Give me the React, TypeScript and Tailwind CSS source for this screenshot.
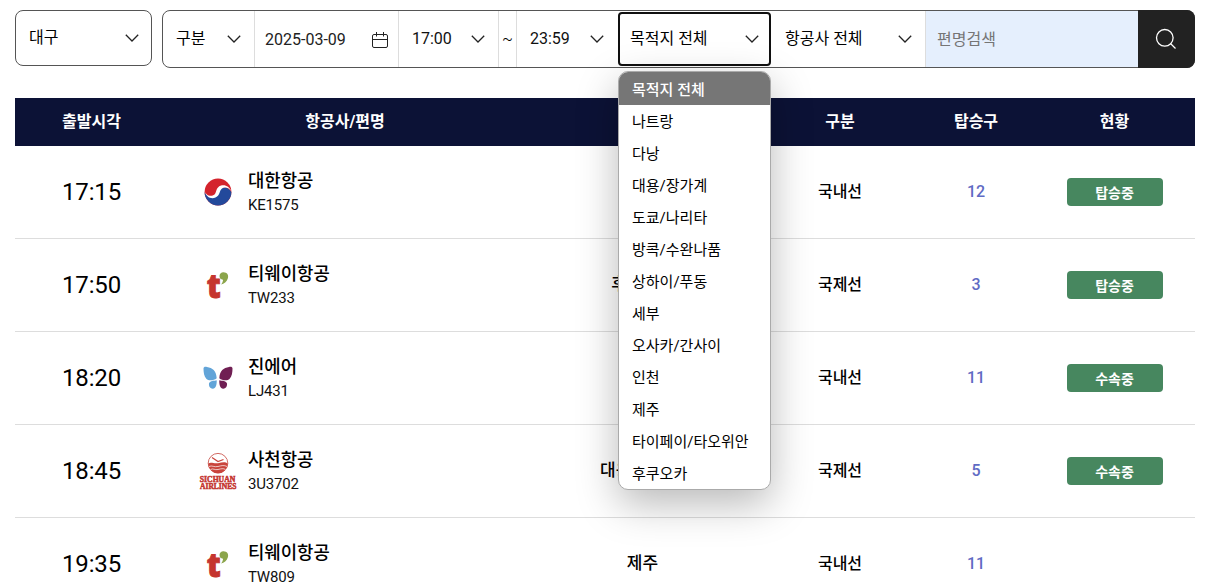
import type { ReactNode } from 'react';

const airports = [
  '목적지 전체', '나트랑', '다낭', '대용/장가계', '도쿄/나리타', '방콕/수완나품', '상하이/푸동',
  '세부', '오사카/간사이', '인천', '제주', '타이페이/타오위안', '후쿠오카',
];

type Flight = {
  time: string;
  logo: ReactNode;
  airline: string;
  code: string;
  dest?: string;
  kind: string;
  gate: string;
  status?: string;
};

function Chevron() {
  return (
    <svg width="14" height="8" viewBox="0 0 14 8" fill="none" stroke="#222" strokeWidth="1.3" className="shrink-0">
      <path d="M0.8 0.8 7 7 13.2 0.8" />
    </svg>
  );
}

function CalendarIcon() {
  return (
    <svg width="16" height="17" viewBox="0 0 16 17" fill="none" stroke="#222" strokeWidth="1" className="shrink-0">
      <rect x="0.5" y="2.5" width="15" height="13" rx="1.5" />
      <path d="M0.5 7.5h15M4.5 0v4.5M11.5 0v4.5" />
    </svg>
  );
}

function KoreanAirLogo() {
  return (
    <svg width="28" height="28" viewBox="0 0 28 28">
      <circle cx="14" cy="14" r="13.4" fill="#d4232c" />
      <path d="M0.600 14C2.500 20 10.500 20.500 13.500 14.800S22.500 6.800 27.400 14A13.400 13.400 0 0 1 0.600 14Z" fill="#23499b" />
      <path d="M0.600 12.500C2 18.300 7.500 19 10.500 16.500 13 14.300 11.500 9.500 17 7.600 21 6.200 25.500 8.600 27.200 13 24.500 9.500 20.500 8.600 18 10.600 15 13 16.500 17.500 11.500 19.600 7 21.400 2 19.300 0.600 12.500Z" fill="#fff" />
    </svg>
  );
}

function TwayLogo() {
  return (
    <svg width="36" height="36" viewBox="0 0 36 36" overflow="visible">
      <text x="6.700" y="30.800" fontSize="33" fontWeight="800" fill="#c5352f" stroke="#c5352f" strokeWidth="0.900" fontFamily="Open Sans, Noto Sans, sans-serif" textLength="14" lengthAdjust="spacingAndGlyphs">t</text>
      <path d="M19.500 9a3.800 3.800 0 0 1 4-3.800C27 5.200 29 8 27.800 11.500 26.800 14.800 24.200 17 21 17.500 22.300 15.900 23 14.500 23 12.700A3.800 3.800 0 0 1 19.500 9Z" fill="#8ba54c" />
    </svg>
  );
}

function JinAirLogo() {
  return (
    <svg width="30" height="26" viewBox="0 0 30 26">
      <path d="M0.500 3.500C0.500 2 2 1.500 4 2 9.500 3 13.200 5.500 13.700 13.200 11 15.500 5.500 16 3.500 14 1 11.500 0.500 7 0.500 3.500Z" fill="#62a4d8" />
      <path d="M29.500 3.500C29.500 2 28 1.500 26 2 20.500 3 16.800 5.500 16.300 13.200 19 15.500 24.500 16 26.500 14 29 11.500 29.500 7 29.500 3.500Z" fill="#701f53" />
      <path d="M13.700 15.200C11 15.800 6.500 15.800 6 18.500 5.600 21.500 7.500 23.800 9.800 23.700 12.700 23.600 13.900 19.700 13.700 15.200Z" fill="#62a4d8" />
      <path d="M16.300 15.200C19 15.800 23.500 15.800 24 18.500 24.400 21.500 22.500 23.800 20.200 23.700 17.300 23.600 16.100 19.700 16.300 15.200Z" fill="#701f53" />
    </svg>
  );
}

function SichuanLogo() {
  return (
    <svg width="40" height="40" viewBox="0 0 40 40">
      <circle cx="20" cy="12.200" r="9.800" fill="#fff" stroke="#cc5a52" strokeWidth="0.900" />
      <path d="M10.200 12.500C13 10.500 16 13 20 12.200S27 10.500 29.800 12.500A9.800 9.800 0 0 1 10.200 12.500Z" fill="#c9443c" />
      <path d="M14 6.500 20 10.500 25.500 8.500" fill="none" stroke="#c9443c" strokeWidth="1.200" />
      <path d="M11 15.500c3-1.500 5 1 9 0s6-1.500 9 0M12.500 18.500c3-1.500 4 .8 7.500 0s5-1.300 7.500 0" fill="none" stroke="#fff" strokeWidth="0.700" />
      <g fill="#c4352f" stroke="#c4352f" strokeWidth="0.500" fontFamily="Liberation Serif, Times New Roman, serif" fontWeight="700" fontSize="7.800">
        <text x="1.800" y="31.200" textLength="35.500" lengthAdjust="spacingAndGlyphs">SICHUAN</text>
        <text x="2" y="37.600" textLength="36.500" lengthAdjust="spacingAndGlyphs">AIRLINES</text>
      </g>
    </svg>
  );
}

const flights: Flight[] = [
  { time: '17:15', logo: <KoreanAirLogo />, airline: '대한항공', code: 'KE1575', kind: '국내선', gate: '12', status: '탑승중' },
  { time: '17:50', logo: <TwayLogo />, airline: '티웨이항공', code: 'TW233', dest: '후쿠오카', kind: '국제선', gate: '3', status: '탑승중' },
  { time: '18:20', logo: <JinAirLogo />, airline: '진에어', code: 'LJ431', kind: '국내선', gate: '11', status: '수속중' },
  { time: '18:45', logo: <SichuanLogo />, airline: '사천항공', code: '3U3702', dest: '대용/장가계', kind: '국제선', gate: '5', status: '수속중' },
  { time: '19:35', logo: <TwayLogo />, airline: '티웨이항공', code: 'TW809', dest: '제주', kind: '국내선', gate: '11' },
];

const columns = 'grid grid-cols-[153px_354px_240px_156px_116px_161px]';

function FilterBar() {
  return (
    <div className="flex items-start gap-[10px] text-base leading-6">
      <div className="flex h-14 w-[137px] items-center justify-between rounded-lg border border-[#555] pr-[12px] pl-[13px]">
        <span>대구</span>
        <Chevron />
      </div>
      <div className="flex h-[58px] w-[1033px] rounded-lg border border-[#555]">
        <div className="flex w-[92px] items-center justify-between border-r border-[#ddd] pr-[13px] pl-[13px]">
          <span>구분</span>
          <Chevron />
        </div>
        <div className="flex w-36 items-center justify-between border-r border-[#ddd] pt-[2px] pr-[10px] pl-[10px] text-[#222]">
          <span>2025-03-09</span>
          <CalendarIcon />
        </div>
        <div className="flex w-[100px] items-center justify-between border-r border-[#ddd] pr-[13px] pl-[13px] text-[#111]">
          <span>17:00</span>
          <Chevron />
        </div>
        <div className="flex w-[18px] items-center justify-center border-r border-[#ddd] text-base font-light">~</div>
        <div className="flex w-[101px] items-center justify-between pr-[14px] pl-[13px] text-[#111]">
          <span>23:59</span>
          <Chevron />
        </div>
        <div className="relative mt-px h-[54px] w-[153px]">
          <div className="flex h-full items-center justify-between rounded-[4px] border-2 border-[#101010] pr-[10px] pl-[10px]">
            <span>목적지 전체</span>
            <Chevron />
          </div>
          <ul className="absolute top-[59px] left-0 z-10 h-[419px] w-[153px] overflow-hidden rounded-[10px] border border-[#aaa] bg-white text-[15px] shadow-[0_14px_42px_rgba(0,0,0,0.28)]">
            {airports.map((name, i) => (
              <li
                key={name}
                className={
                  i === 0
                    ? 'flex h-[33px] items-center bg-[#767676] pt-[2px] pl-[13px] font-medium text-white'
                    : 'flex h-8 items-center pt-[2px] pl-[13px]'
                }
              >
                {name}
              </li>
            ))}
          </ul>
        </div>
        <div className="flex w-[155px] items-center justify-between border-r border-[#ddd] pr-[13px] pl-[14px]">
          <span>항공사 전체</span>
          <Chevron />
        </div>
        <div className="flex w-[212px] items-center bg-[#e5effd] pt-[2px] pl-[11px] text-[#757575]">편명검색</div>
        <div className="-my-px -mr-px flex w-[57px] items-center justify-center rounded-r-lg bg-[#222] pr-[2px]">
          <svg width="22" height="22" viewBox="0 0 22 22" fill="none" stroke="#fff" strokeWidth="1.300">
            <circle cx="9.800" cy="9.800" r="8.300" />
            <path d="m15.500 15.500 5 5" />
          </svg>
        </div>
      </div>
    </div>
  );
}

function FlightRow({ flight }: { flight: Flight }) {
  return (
    <div className={`${columns} h-[93px] items-center border-b border-[#ddd] text-center font-medium`}>
      <div className="text-2xl font-normal tracking-[-0.15px]">{flight.time}</div>
      <div className="flex items-center text-left">
        <div className="ml-[30px] flex w-10 justify-center">{flight.logo}</div>
        <div className="ml-[10px] pt-[2px]">
          <div className="text-[17.800px] leading-6">{flight.airline}</div>
          <div className="text-[15px] leading-6 font-normal tracking-[-0.2px] text-[#111]">{flight.code}</div>
        </div>
      </div>
      <div className="pl-px text-[17px]">{flight.dest}</div>
      <div>{flight.kind}</div>
      <div className="text-[#5f6bc4]">{flight.gate}</div>
      <div className="flex justify-center">
        {flight.status && (
          <span className="flex h-7 w-24 items-center justify-center rounded-[4px] bg-[#47875f] pt-px text-sm font-bold text-white">
            {flight.status}
          </span>
        )}
      </div>
    </div>
  );
}

export default function App() {
  return (
    <main className="h-[588px] w-[1208px] overflow-hidden bg-white pt-[10px] pl-[15px] font-[Roboto,'Noto_Sans_CJK_KR',sans-serif] text-black">
      <FilterBar />
      <div className="mt-[30px] w-[1180px]">
        <div className={`${columns} h-12 items-center bg-[#0c1236] text-center font-bold text-white`}>
          <div>출발시각</div>
          <div>항공사/편명</div>
          <div />
          <div>구분</div>
          <div>탑승구</div>
          <div>현황</div>
        </div>
        {flights.map((flight) => (
          <FlightRow key={flight.time} flight={flight} />
        ))}
      </div>
    </main>
  );
}
